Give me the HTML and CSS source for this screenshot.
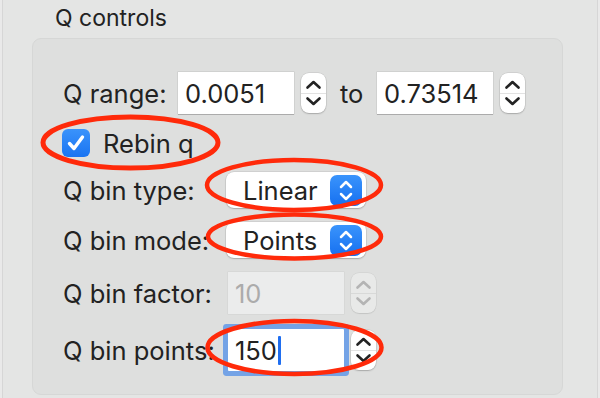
FILE: index.html
```html
<!DOCTYPE html>
<html>
<head>
<meta charset="utf-8">
<link rel="stylesheet" href="styles.css">
</head>
<body>
<div class="panel">
  <div class="title">Q controls</div>
  <div class="group">
    <div class="row row-range">
      <span class="label">Q range:</span>
      <div class="field w116"><span class="val">0.0051</span></div>
      <div class="stepper">
        <svg class="chev" width="25" height="40" viewBox="0 0 25 40"><path d="M6.5 14.5 L12.5 9 L18.5 14.5" /><path d="M6.5 25.5 L12.5 31 L18.5 25.5" /></svg>
      </div>
      <span class="to">to</span>
      <div class="field w116"><span class="val">0.73514</span></div>
      <div class="stepper">
        <svg class="chev" width="25" height="40" viewBox="0 0 25 40"><path d="M6.5 14.5 L12.5 9 L18.5 14.5" /><path d="M6.5 25.5 L12.5 31 L18.5 25.5" /></svg>
      </div>
    </div>
    <div class="row row-check">
      <span class="checkbox">
        <svg width="28" height="28" viewBox="0 0 28 28"><path d="M7.5 14.5 L12 19.5 L20.5 8" /></svg>
      </span>
      <span class="label">Rebin q</span>
    </div>
    <div class="row row-popup">
      <span class="label lab">Q bin type:</span>
      <div class="popup"><span class="ptext">Linear</span>
        <span class="pbtn"><svg width="32" height="31" viewBox="0 0 32 31"><path d="M11 12 L16 7 L21 12" /><path d="M11 19 L16 24 L21 19" /></svg></span>
      </div>
    </div>
    <div class="row row-popup">
      <span class="label lab">Q bin mode:</span>
      <div class="popup"><span class="ptext">Points</span>
        <span class="pbtn"><svg width="32" height="31" viewBox="0 0 32 31"><path d="M11 12 L16 7 L21 12" /><path d="M11 19 L16 24 L21 19" /></svg></span>
      </div>
    </div>
    <div class="row row-factor">
      <span class="label lab">Q bin factor:</span>
      <div class="field w116 disabled"><span class="val">10</span></div>
      <div class="stepper disabled">
        <svg class="chev" width="25" height="40" viewBox="0 0 25 40"><path d="M6.5 14.5 L12.5 9 L18.5 14.5" /><path d="M6.5 25.5 L12.5 31 L18.5 25.5" /></svg>
      </div>
    </div>
    <div class="row row-points">
      <span class="label lab">Q bin points:</span>
      <div class="field w116 focused"><span class="val">150</span><span class="caret"></span></div>
      <div class="stepper">
        <svg class="chev" width="25" height="40" viewBox="0 0 25 40"><path d="M6.5 14.5 L12.5 9 L18.5 14.5" /><path d="M6.5 25.5 L12.5 31 L18.5 25.5" /></svg>
      </div>
    </div>
  </div>
</div>
<svg class="marks" width="600" height="398" viewBox="0 0 600 398">
  <ellipse class="thick" cx="130.5" cy="142.5" rx="87.5" ry="25.5" />
  <ellipse cx="294" cy="185" rx="87" ry="25" />
  <ellipse cx="294.5" cy="236.5" rx="86.5" ry="22" />
  <ellipse cx="294.5" cy="347.5" rx="87" ry="26.5" />
</svg>
</body>
</html>
```

FILE: styles.css
```css
html, body {
  margin: 0;
  padding: 0;
}
body {
  width: 600px;
  height: 398px;
  overflow: hidden;
  background: #e9e9e9;
  font-family: "Inter", "DejaVu Sans", sans-serif;
  color: #222;
  position: relative;
}
.panel {
  margin-left: 2px;
  width: 594px;
  height: 398px;
  background: #e4e5e4;
  border-left: 1px solid #d6d6d6;
  border-right: 1px solid #d6d6d6;
  box-sizing: content-box;
}
.title {
  font-size: 23px;
  padding-left: 52px;
  height: 38px;
  line-height: 36px;
}
.group {
  margin-left: 29px;
  width: 531px;
  height: 357px;
  box-sizing: border-box;
  background: #dedfde;
  border: 1px solid #d6d7d6;
  border-radius: 9px;
  padding: 33px 0 0 30px;
  display: flex;
  flex-direction: column;
  gap: 14px;
}
.row {
  display: flex;
  align-items: center;
  font-size: 25.5px;
}
.row-range { height: 42px; }
.row-check { height: 30px; }
.row-popup { height: 36px; }
.row-factor { height: 42px; }
.row-points { height: 44px; }
.label {
  white-space: nowrap;
}
.row-range .label { width: 115px; }
.lab { width: 165px; }
.field {
  height: 42px;
  background: #fff;
  box-sizing: border-box;
  box-shadow: 0 0 0 0.5px rgba(0,0,0,0.12), 0 1px 0 rgba(0,0,0,0.18);
  display: flex;
  align-items: center;
  padding-left: 7px;
  position: relative;
  flex: none;
}
.w116 { width: 116px; }
.field.disabled {
  background: #ebecec;
  color: #ababab;
  box-shadow: 0 0 0 0.5px rgba(0,0,0,0.06);
}
.field.focused {
  box-shadow: 0 0 0 5px #74a3e6;
  border-radius: 1px;
}
.caret {
  display: inline-block;
  width: 3px;
  height: 29px;
  background: #1f6ef0;
  border-radius: 1px;
  margin-left: 1px;
}
.stepper {
  width: 25px;
  height: 40px;
  margin-left: 7px;
  background: #fff;
  border-radius: 8px;
  box-shadow: 0 0 0 0.5px rgba(0,0,0,0.12), 0 1px 1.5px rgba(0,0,0,0.2);
  position: relative;
  flex: none;
}
.stepper::before {
  content: "";
  position: absolute;
  left: 0;
  right: 0;
  top: 19.5px;
  height: 1px;
  background: #e2e2e2;
}
.chev {
  position: relative;
  display: block;
}
.chev path {
  fill: none;
  stroke: #232323;
  stroke-width: 2.6;
  stroke-linecap: round;
  stroke-linejoin: round;
}
.stepper.disabled {
  background: #e8e9e8;
  box-shadow: 0 0 0 0.5px rgba(0,0,0,0.08), 0 1px 1px rgba(0,0,0,0.08);
}
.stepper.disabled::before { background: #d8d9d8; }
.stepper.disabled .chev path { stroke: #b4b4b4; }
.to {
  margin-left: 14px;
  width: 37px;
}
.checkbox {
  width: 28px;
  height: 28px;
  border-radius: 6px;
  background: linear-gradient(#3a93fb, #1a74f2);
  margin-left: -1px;
  margin-right: 13px;
  flex: none;
}
.checkbox svg { display: block; }
.checkbox path {
  fill: none;
  stroke: #fff;
  stroke-width: 3.4;
  stroke-linecap: round;
  stroke-linejoin: round;
}
.popup {
  width: 140px;
  height: 36px;
  margin-left: -2px;
  background: #fff;
  border-radius: 8px;
  box-shadow: 0 0 0 0.5px rgba(0,0,0,0.12), 0 1px 1.5px rgba(0,0,0,0.2);
  display: flex;
  align-items: center;
  justify-content: space-between;
  padding: 0 4px 0 17px;
  box-sizing: border-box;
  flex: none;
}
.pbtn {
  width: 32px;
  height: 31px;
  border-radius: 7px;
  background: linear-gradient(#3a94fc, #1670f0);
}
.pbtn svg { display: block; }
.pbtn path {
  fill: none;
  stroke: #fff;
  stroke-width: 2.5;
  stroke-linecap: round;
  stroke-linejoin: round;
}
.marks {
  position: absolute;
  left: 0;
  top: 0;
  pointer-events: none;
}
.marks ellipse {
  fill: none;
  stroke: #ff2a0a;
  stroke-width: 4.5;
}
.marks ellipse.thick {
  stroke-width: 5;
}
```
